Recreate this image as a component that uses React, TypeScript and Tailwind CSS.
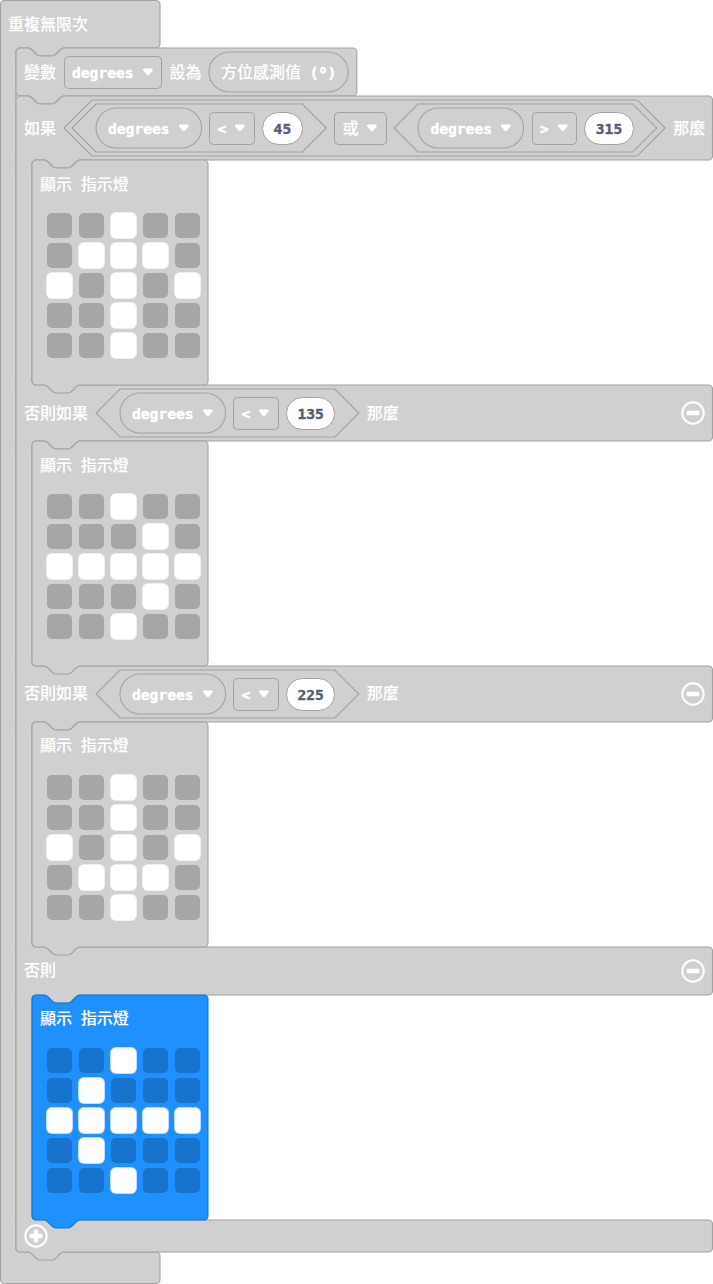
import React from "react";

const BUMP_LEFT = "c-2 0-3 1-4 2l-4 4c-1 1-2 2-4 2h-12c-2 0-3-1-4-2l-4-4c-1-1-2-2-4-2";
const NOTCH_RIGHT = "c2 0 3 1 4 2l4 4c1 1 2 2 4 2h12c2 0 3-1 4-2l4-4c1-1 2-2 4-2";

function Outline({ d, className = "fill-[#d0d0d0] stroke-[#a2a2a2]" }: { d: string; className?: string }) {
  return (
    <svg aria-hidden="true" className="pointer-events-none absolute inset-0 h-full w-full overflow-visible">
      <path d={d} className={className} strokeWidth="1.1" />
    </svg>
  );
}

function Label({ children, raised = false }: { children: React.ReactNode; raised?: boolean }) {
  return (
    <span
      className={
        "shrink-0 whitespace-pre font-['DejaVu_Sans_Mono','Noto_Sans_CJK_TC',monospace] text-base leading-6 font-medium text-white [word-spacing:-0.8px] [-webkit-text-stroke:0.1px_white] " +
        (raised ? "pb-px" : "pt-px")
      }
    >
      {children}
    </span>
  );
}

function Code({ children }: { children: React.ReactNode }) {
  return (
    <span className="shrink-0 whitespace-pre pt-[2px] font-['DejaVu_Sans_Mono',monospace] text-[14.62px] leading-6 font-bold [-webkit-text-stroke:0.45px_currentColor]">
      {children}
    </span>
  );
}

function Caret() {
  return (
    <svg viewBox="0 0 12 8" className="h-2 w-3 shrink-0 fill-white">
      <path d="M1.9.6h7.9c1.1 0 1.3 1 .6 1.8L7.1 6.6c-.7.8-1.8.8-2.5 0L1.3 2.4C.6 1.6.8.6 1.9.6z" />
    </svg>
  );
}

function Select({ children }: { children: React.ReactNode }) {
  return (
    <div className="relative flex h-8 shrink-0 items-center gap-2 px-2 text-white">
      <div className="absolute -inset-[0.5px] rounded-[4.5px] border border-[#a2a2a2]" />
      {children}
      <Caret />
    </div>
  );
}

function VariableOval() {
  return (
    <div className="relative flex h-10 w-[105.6px] shrink-0 items-center gap-2 px-3 text-white">
      <Outline
        className="fill-none stroke-[#a2a2a2]"
        d="M20 0H85.6A20 20 0 0 1 85.6 40H20A20 20 0 0 1 20 0z"
      />
      <Code>degrees</Code>
      <Caret />
    </div>
  );
}

function NumberPill({ value }: { value: string }) {
  return (
    <div
      className={
        "-mx-[0.5px] flex h-[33px] shrink-0 items-center justify-center rounded-full border border-[#a2a2a2] bg-white text-[#575e75] " +
        (value.length > 2 ? "w-[49.4px]" : "w-[41px]")
      }
    >
      <Code>{value}</Code>
    </div>
  );
}

function Comparison({ op, value }: { op: string; value: string }) {
  const wide = value.length > 2;
  return (
    <div className="relative flex h-12 shrink-0 items-center gap-2 px-6">
      <Outline
        className="fill-none stroke-[#a2a2a2]"
        d={wide ? "M24 0H238.8L262.8 24L238.8 48H24L0 24z" : "M24 0H230.4L254.4 24L230.4 48H24L0 24z"}
      />
      <VariableOval />
      <Select>
        <Code>{op}</Code>
      </Select>
      <NumberPill value={value} />
    </div>
  );
}

function Toggle({ plus = false }: { plus?: boolean }) {
  return (
    <svg viewBox="0 0 24 24" className="mb-px h-6 w-6 shrink-0 fill-white">
      <circle cx="12" cy="12" r="10.7" fill="none" stroke="white" strokeWidth="2" />
      <rect x="5.7" y="9.8" width="12.6" height="4.4" rx="0.8" />
      {plus && <rect x="9.8" y="5.7" width="4.4" height="12.6" rx="0.8" />}
    </svg>
  );
}

function ShowLeds({ rows, active = false, raised = false }: { rows: string[]; active?: boolean; raised?: boolean }) {
  return (
    <div className="relative ml-4 h-[225px] w-44">
      <Outline
        className={active ? "fill-[#1e90ff] stroke-[#1873cc]" : undefined}
        d={`M0 4a4 4 0 0 1 4-4h8${NOTCH_RIGHT}H172a4 4 0 0 1 4 4V221a4 4 0 0 1-4 4H48${BUMP_LEFT}H4a4 4 0 0 1-4-4z`}
      />
      <div className="relative flex h-12 items-center pl-2">
        <Label raised={raised}>顯示 指示燈</Label>
      </div>
      <div className="relative ml-[15px] grid w-[153px] grid-cols-5 gap-x-[7px] gap-y-[5px] pt-[5px]">
        {rows.join("").split("").map((c, i) => (
          <div
            key={i}
            className={
              "h-[25px] w-[25px] rounded-[5px] " +
              (c === "#" ? "bg-white ring-1 ring-white/70" : active ? "bg-[#1873cc]" : "bg-[#a6a6a6]")
            }
          />
        ))}
      </div>
    </div>
  );
}

const arm = (top: number, bottom: number) =>
  `V${top - 4}a4 4 0 0 1-4 4H64${BUMP_LEFT}H20a4 4 0 0 0-4 4V${bottom - 4}a4 4 0 0 0 4 4H692.5a4 4 0 0 1 4 4`;

function ElseIf({ value, raised = false }: { value: string; raised?: boolean }) {
  return (
    <div className="relative flex h-14 items-center gap-2 px-2">
      <Label raised={raised}>否則如果</Label>
      <Comparison op="<" value={value} />
      <Label raised={raised}>那麼</Label>
      <div className="ml-auto flex">
        <Toggle />
      </div>
    </div>
  );
}

function IfBlock() {
  return (
    <div className="relative ml-4 h-[1156px] w-[697px]">
      <Outline
        d={`M0 4a4 4 0 0 1 4-4h8${NOTCH_RIGHT}H692.5a4 4 0 0 1 4 4${arm(64, 289)}${arm(345, 570)}${arm(626, 851)}${arm(899, 1124)}V1152a4 4 0 0 1-4 4H48${BUMP_LEFT}H4a4 4 0 0 1-4-4z`}
      />
      <div className="relative flex h-16 items-center gap-2 pl-2">
        <Label>如果</Label>
        <div className="relative flex h-14 shrink-0 items-center gap-2 px-2">
          <Outline className="fill-none stroke-[#a2a2a2]" d="M28 0H573.2L601.2 28L573.2 56H28L0 28z" />
          <Comparison op="<" value="45" />
          <Select>
            <Label>或</Label>
          </Select>
          <Comparison op=">" value="315" />
        </div>
        <Label>那麼</Label>
      </div>
      <ShowLeds rows={["..#..", ".###.", "#.#.#", "..#..", "..#.."]} />
      <ElseIf value="135" />
      <ShowLeds rows={["..#..", "...#.", "#####", "...#.", "..#.."]} />
      <ElseIf value="225" raised />
      <ShowLeds raised rows={["..#..", "..#..", "#.#.#", ".###.", "..#.."]} />
      <div className="relative flex h-12 items-center justify-between px-2">
        <Label raised>否則</Label>
        <Toggle />
      </div>
      <ShowLeds active raised rows={["..#..", ".#...", "#####", ".#...", "..#.."]} />
      <div className="relative flex h-8 items-center pl-2">
        <Toggle plus />
      </div>
    </div>
  );
}

function SetVariable() {
  return (
    <div className="relative ml-4 flex h-12 w-[340.8px] items-center px-2">
      <Outline
        d={`M0 4a4 4 0 0 1 4-4h8${NOTCH_RIGHT}H336.8a4 4 0 0 1 4 4V44a4 4 0 0 1-4 4H48${BUMP_LEFT}H4a4 4 0 0 1-4-4z`}
      />
      <div className="relative flex items-center gap-2">
        <Label>變數</Label>
        <Select>
          <Code>degrees</Code>
        </Select>
        <Label>設為</Label>
        <div className="relative -left-[0.6px] flex h-10 w-[139.2px] shrink-0 items-center px-3 text-white">
          <Outline
            className="fill-none stroke-[#a2a2a2]"
            d="M20 0H119.2A20 20 0 0 1 119.2 40H20A20 20 0 0 1 20 0z"
          />
          <Label>方位感測值</Label>
          <Code>
            {" ("}
            <span className="relative top-[2px] inline-block w-[8.8px] text-center font-['Noto_Sans',sans-serif] text-[17px] leading-none">
              º
            </span>
            {")"}
          </Code>
        </div>
      </div>
    </div>
  );
}

export default function App() {
  return (
    <main className="relative h-[1284px] w-[713px] overflow-hidden bg-white">
      <Outline
        d={`M.5 4.5a4 4 0 0 1 4-4H156a4 4 0 0 1 4 4V44a4 4 0 0 1-4 4H64${BUMP_LEFT}H20a4 4 0 0 0-4 4V1248a4 4 0 0 0 4 4H156a4 4 0 0 1 4 4V1279.5a4 4 0 0 1-4 4H4.5a4 4 0 0 1-4-4z`}
      />
      <div className="relative flex h-12 items-center pl-2">
        <Label>重複無限次</Label>
      </div>
      <SetVariable />
      <IfBlock />
    </main>
  );
}
